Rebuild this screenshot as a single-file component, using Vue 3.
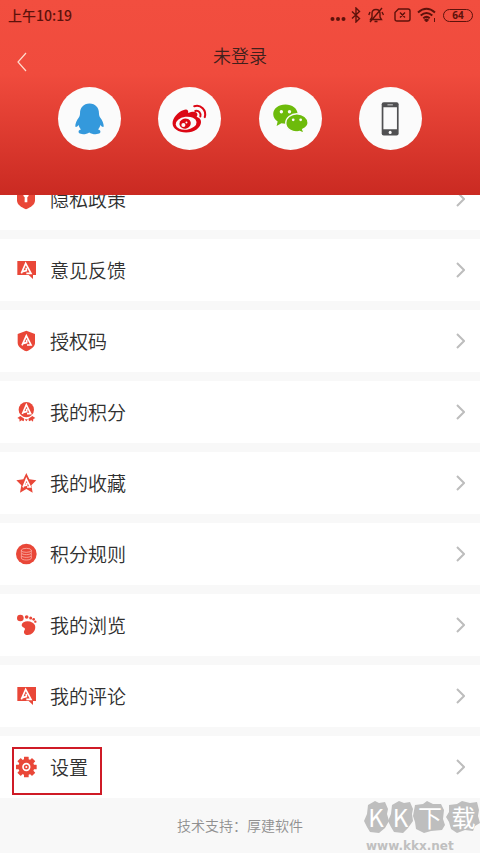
<script setup>
const rows = [
  { label: '隐私政策', icon: 'lock' },
  { label: '意见反馈', icon: 'bubble' },
  { label: '授权码', icon: 'shield' },
  { label: '我的积分', icon: 'medal' },
  { label: '我的收藏', icon: 'star' },
  { label: '积分规则', icon: 'coins' },
  { label: '我的浏览', icon: 'foot' },
  { label: '我的评论', icon: 'bubble' },
  { label: '设置', icon: 'gear', marked: true },
]
const teeth = [0, 45, 90, 135, 180, 225, 270, 315]
</script>

<template>
  <div class="page">
    <header class="header">
      <div class="status">
        <span class="time">上午10:19</span>
        <div class="indicators">
          <svg class="dots" width="16" height="16" viewBox="0 0 16 16" aria-hidden="true">
            <circle cx="2.5" cy="12" r="2" /><circle cx="8" cy="12" r="2" /><circle cx="13.5" cy="12" r="2" />
          </svg>
          <svg class="line bt" width="10" height="16" viewBox="0 0 10 16" aria-hidden="true">
            <path d="M1 4.5 8.5 11.5 5 15V1l3.5 3.5L1 11.5" />
          </svg>
          <svg class="line bell" width="16" height="16" viewBox="0 0 16 16" aria-hidden="true">
            <path d="M2.5 12.5h11L12 10V6.500C12 3.800 10.300 2.500 8 2.500S4 3.800 4 6.500V10zM6.500 14.500h3M14 1 2 15M14 5l1.500 3M2 5 .8 8" />
          </svg>
          <svg class="line sim" width="17" height="14" viewBox="0 0 17 14" aria-hidden="true">
            <path d="M4.500 1H14q2 0 2 2v8q0 2-2 2H3q-2 0-2-2V4.500zM6 4.500l5 5M11 4.500l-5 5" />
          </svg>
          <svg class="line wifi" width="20" height="16" viewBox="0 0 20 16" aria-hidden="true">
            <path d="M1 5.500q8.500-7.500 17 0M3.700 8.500q5.800-5 11.600 0M6.300 11.300q3.200-2.800 6.400 0" />
            <path d="m9.500 15-2-2.200q2-1.500 4 0zM17.500 11v4" class="thin" />
          </svg>
          <span class="battery">64</span>
        </div>
      </div>
      <div class="titlebar">
        <button class="back" type="button" aria-label="返回">
          <svg width="10" height="20" viewBox="0 0 10 20"><path d="M9 1 1 10l8 9" /></svg>
        </button>
        <h1>未登录</h1>
      </div>
      <nav class="logins">
        <button type="button" aria-label="QQ">
          <svg viewBox="25 22 186 186">
            <path fill="#3499dc" d="M118 71C100 71 90 84 90 100c0 6-2 9-4 13-6 8-10 17-10 25 1 4 6 1 10-4 1 5 3 9 7 13-7 2-9 7-6 11 6 5 23 4 30-2 8 6 25 7 32 2 3-4 1-9-6-11 4-4 6-8 7-13 4 5 9 8 10 4 0-8-4-17-10-25-2-4-4-7-4-13 0-16-10-29-28-29z" />
          </svg>
        </button>
        <button type="button" aria-label="微博">
          <svg viewBox="327 22 186 186">
            <path fill="#dc0714" d="M401 91c10-5 17-2 15 8 12-6 25-6 27 2 1 3 0 6-2 9 9 3 13 8 13 15 0 17-20 31-44 31-23 0-40-11-40-27 0-15 16-33 31-38z" />
            <ellipse cx="410" cy="129" rx="31" ry="19" fill="#fbfbfb" transform="rotate(-7 410 129)" />
            <ellipse cx="407" cy="130" rx="17" ry="15" fill="#dc0714" transform="rotate(-15 407 130)" />
            <circle cx="402" cy="134" r="6" fill="#fbfbfb" /><circle cx="411" cy="127" r="3" fill="#fbfbfb" />
            <path d="M434 79c19-6 37 11 31 32M437 93c10-3 18 6 15 16" fill="none" stroke="#dc0714" stroke-width="6" stroke-linecap="round" />
          </svg>
        </button>
        <button type="button" aria-label="微信">
          <svg viewBox="28 22 186 186">
            <path fill="#6dbb0b" d="M106 74c-20 0-36 12-36 28 0 9 5 17 13 22l-3 13 14-8c26 6 48-8 48-27 0-16-16-28-36-28z" />
            <path fill="#6dbb0b" stroke="#fbfbfb" stroke-width="4" d="M140 101c-18 0-33 12-33 27 0 18 20 31 41 25l13 6-4-12c10-5 16-12 16-19 0-15-15-27-33-27z" />
            <g fill="#fbfbfb"><circle cx="94" cy="95" r="5" /><circle cx="118" cy="95" r="5" /><circle cx="129" cy="119" r="4" /><circle cx="151" cy="119" r="4" /></g>
          </svg>
        </button>
        <button type="button" aria-label="手机">
          <svg viewBox="330 22 186 186">
            <rect x="397" y="67" width="50" height="98" rx="6" fill="#505052" />
            <path fill="#fbfbfb" d="M402 82h40v65h-40zM414 74h16v2h-16z" />
            <circle cx="422" cy="156" r="4.500" fill="#fbfbfb" />
          </svg>
        </button>
      </nav>
    </header>

    <main class="list">
      <a v-for="row in rows" :key="row.label" class="row" :class="{ marked: row.marked }" href="#">
        <svg class="icon" viewBox="0 0 66 66" aria-hidden="true">
          <template v-if="row.icon === 'lock'">
            <path d="M33 2 60 12v25c0 13-12 21-27 27C18 58 6 50 6 37V12z" />
            <path class="cut" d="M33 13a8 8 0 0 0-4 15v15h8V28a8 8 0 0 0-4-15z" />
          </template>
          <template v-else-if="row.icon === 'bubble'">
            <path d="M7 6h56v42h-9v12L41 48H7z" />
            <path class="mark" d="M19 43 32 13l16 30H34M34 26v9l-12 3" />
          </template>
          <template v-else-if="row.icon === 'shield'">
            <path d="M34 2 60 12v26c0 12-12 20-26 26C20 58 8 50 8 38V12z" />
            <path class="mark" d="M21 46 34 17l14 28H36M35 29v9l-12 3" />
          </template>
          <template v-else-if="row.icon === 'medal'">
            <circle cx="34" cy="26" r="23" />
            <path d="m16 45 12 8-2 8-7-3-5 4-1-8-6-3zM52 45l-12 8 2 8 7-3 5 4 1-8 6-3zM29 55h10l-5 6z" />
            <path class="mark" d="M22 39 34 11l13 27H36M35 23v9l-12 3" />
          </template>
          <template v-else-if="row.icon === 'star'">
            <path d="m34 3 9 19 21 3-15 15 4 22-19-11-19 11 4-22L4 25l21-3z" />
            <path class="mark" d="M24 46 34 21l12 24H36M35 32v7l-11 3" />
          </template>
          <template v-else-if="row.icon === 'coins'">
            <circle cx="34" cy="33" r="31" />
            <g class="outline">
              <ellipse cx="34" cy="22" rx="15" ry="6" />
              <path d="M19 22v7c0 8 30 8 30 0v-7M19 31v6c0 8 30 8 30 0v-6M19 39v6c0 8 30 8 30 0v-6" />
            </g>
          </template>
          <template v-else-if="row.icon === 'foot'">
            <circle cx="16" cy="12" r="10" /><circle cx="35" cy="9" r="5.500" /><circle cx="47" cy="12" r="4.500" />
            <circle cx="56" cy="16" r="4" /><circle cx="61" cy="23" r="3.500" />
            <path d="M20 33c2-12 20-14 33-7 11 6 10 22 0 31-8 8-24 8-26-1-1-6 3-8 3-12-2-4-10-4-10-11z" />
          </template>
          <template v-else>
            <circle cx="34" cy="33" r="24" />
            <rect v-for="angle in teeth" :key="angle" x="27" y="2" width="14" height="14" rx="1" :transform="`rotate(${angle} 34 33)`" />
            <circle class="ring" cx="34" cy="33" r="10" />
            <circle class="cut" cx="34" cy="33" r="3" />
          </template>
        </svg>
        <span class="label">{{ row.label }}</span>
        <svg class="chevron" width="9" height="16" viewBox="0 0 9 16" aria-hidden="true"><path d="m1 1 7 7-7 7" /></svg>
      </a>
    </main>

    <footer class="footer">
      <p>技术支持：厚建软件</p>
      <div class="watermark">
        <div class="name">
          <svg width="116" height="34" viewBox="0 0 116 34" aria-hidden="true">
            <path d="m4 5 7-4 4 2 6-1 3 7-1 5 2 7-4 7-6 5-9-1-3-5-3-6 3-7z" />
            <path d="m28 5 7-4 5 2 6-1 3 7-1 5 1 7-5 7-5 5-9-1-3-5-3-6 3-7z" />
            <path d="m51 5 8-1 4-3 6 3h8l3 6-1 9 2 6-3 5-11 1-7 2-8-4-1-7-2-6z" />
            <path d="m85 5 8-1 5-3 8 2 7-1 2 8-1 6 2 7-5 3-2 5-8-1-8 3-6-4-2-7-3-5 3-5z" />
          </svg>
          <span>K</span><span>K</span><span>下</span><span>载</span>
        </div>
        <div class="site">www.kkx.net</div>
      </div>
    </footer>
  </div>
</template>

<style>
body {
  background: #f8f8f8;
}
</style>

<style scoped>
.page {
  font-family: "Noto Sans CJK SC", sans-serif;
  color: #303030;
}
.header {
  position: relative;
  z-index: 1;
  height: 195px;
  box-sizing: border-box;
  background: linear-gradient(#f24e3f 0%, #f04b3d 38%, #ca2a22 100%);
}
.status {
  display: flex;
  align-items: center;
  justify-content: space-between;
  height: 30px;
  padding: 0 7px 0 8px;
  color: #5d120b;
}
.time {
  font-size: 14px;
  font-weight: 500;
  line-height: 20px;
}
.indicators {
  display: flex;
  align-items: center;
}
.indicators svg {
  fill: #5d120b;
}
.indicators .line {
  fill: none;
  stroke: #5d120b;
  stroke-width: 1.4;
}
.indicators .wifi {
  stroke-width: 2;
}
.indicators .thin {
  stroke-width: 1;
  fill: #5d120b;
}
.bt {
  margin-left: 5px;
}
.bell {
  margin-left: 7px;
}
.sim {
  margin-left: 10px;
}
.wifi {
  margin-left: 6px;
}
.battery {
  box-sizing: border-box;
  width: 30px;
  height: 13px;
  margin-left: 6px;
  border: 1px solid #5d120b;
  border-radius: 7px;
  font: bold 10px/11px "Noto Sans", sans-serif;
  text-align: center;
}
.titlebar {
  position: relative;
  display: flex;
  justify-content: center;
  height: 52px;
}
h1 {
  margin: 0;
  font-size: 18px;
  font-weight: 350;
  line-height: 50px;
  color: #40201c;
}
.back {
  position: absolute;
  left: 7px;
  top: 12px;
  display: flex;
  padding: 10px;
  border: 0;
  background: none;
}
.back path {
  fill: none;
  stroke: #ffdccf;
  stroke-width: 1.2;
}
.logins {
  display: flex;
  justify-content: space-between;
  padding: 5px 58px 0;
}
.logins button {
  width: 63px;
  height: 63px;
  padding: 0;
  border: 0;
  border-radius: 50%;
  background: #fbfbfb;
}
.logins svg {
  display: block;
  width: 100%;
}
.list {
  display: flex;
  flex-direction: column;
  gap: 9px;
  margin-top: -27px;
}
.row {
  position: relative;
  display: flex;
  align-items: center;
  height: 62px;
  padding: 0 15px;
  background: #fff;
  color: inherit;
  text-decoration: none;
}
.marked::after {
  content: "";
  position: absolute;
  left: 12px;
  top: 11px;
  width: 86px;
  height: 44px;
  border: 2px solid #cf1b26;
}
.icon {
  width: 22px;
  height: 22px;
  margin-right: 13px;
  fill: #e94738;
}
.icon .cut {
  fill: #fff;
}
.icon .mark {
  fill: none;
  stroke: #fff;
  stroke-width: 5;
}
.icon .outline {
  fill: none;
  stroke: #ffc9c2;
  stroke-width: 2;
}
.icon .ring {
  fill: none;
  stroke: #fff;
  stroke-width: 5;
}
.label {
  flex: 1;
  font-size: 19px;
  font-weight: 350;
  line-height: 28px;
}
.chevron {
  fill: none;
  stroke: #bdbdbd;
  stroke-width: 2;
}
.footer {
  position: relative;
  height: 55px;
}
.footer p {
  margin: 0;
  font-size: 14px;
  font-weight: 350;
  line-height: 55px;
  text-align: center;
  color: #909090;
}
.watermark {
  position: absolute;
  right: 0;
  top: 2px;
}
.name {
  position: relative;
  display: grid;
  grid-template-columns: 24px 25px 34px 33px;
  font-size: 24px;
  line-height: 34px;
  text-align: center;
  color: #fff;
}
.name svg {
  position: absolute;
  left: 0;
  top: 0;
  fill: #bebebe;
}
.name span {
  position: relative;
}
.site {
  padding: 5px 0 0 2px;
  font: bold 12px/14px "DejaVu Sans", sans-serif;
  color: #c0c0c0;
}
</style>
